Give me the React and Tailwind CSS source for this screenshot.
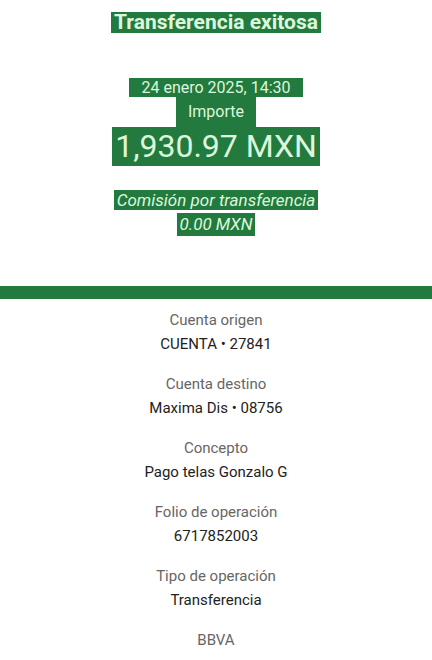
import React from 'react';

const details = [
  { label: 'Cuenta origen', value: 'CUENTA • 27841' },
  { label: 'Cuenta destino', value: 'Maxima Dis • 08756' },
  { label: 'Concepto', value: 'Pago telas Gonzalo G' },
  { label: 'Folio de operación', value: '6717852003' },
  { label: 'Tipo de operación', value: 'Transferencia' },
  { label: 'BBVA', value: '' },
];

const Mark = ({ className = '', children }) => (
  <span className={`inline-block bg-[#237a3e] text-[#dcf7dc] ${className}`}>{children}</span>
);

const App = () => {
  return (
    <div className="w-[432px] h-[660px] overflow-hidden bg-white font-['Roboto',sans-serif]">
      {/* Header */}
      <div className="flex flex-col items-center pt-[12px]">
        <Mark className="h-[21px] px-[3px] text-[21px] font-bold leading-[21px]">Transferencia exitosa</Mark>

        <div className="mt-[45px] flex flex-col items-center">
          <Mark className="h-[19px] px-[12px] text-[16px] leading-[19px]">24 enero 2025, 14:30</Mark>
          <Mark className="h-[30px] px-[12px] text-[16px] leading-[30px]">Importe</Mark>
          <Mark className="h-[39px] px-[3px] text-[32px] leading-[39px]">1,930.97 MXN</Mark>
        </div>

        <div className="mt-[24px] flex flex-col items-center">
          <Mark className="h-[20px] px-[3px] text-[17px] italic leading-[20px]">Comisión por transferencia</Mark>
          <Mark className="mt-[3px] h-[23px] px-[3px] text-[17px] italic leading-[23px]">0.00 MXN</Mark>
        </div>
      </div>

      {/* Divider */}
      <div className="mt-[50px] h-[13px] bg-[#237a3e]" />

      {/* Details */}
      <div className="flex flex-col items-center pt-[11px]">
        {details.map((d) => (
          <div key={d.label} className="flex h-[64px] flex-col items-center">
            <span className="text-[15px] leading-[20px] text-[#666]">{d.label}</span>
            {d.value && (
              <span className="mt-[4px] text-[15px] leading-[20px] text-[#222]">{d.value}</span>
            )}
          </div>
        ))}
      </div>
    </div>
  );
};

export default App;
